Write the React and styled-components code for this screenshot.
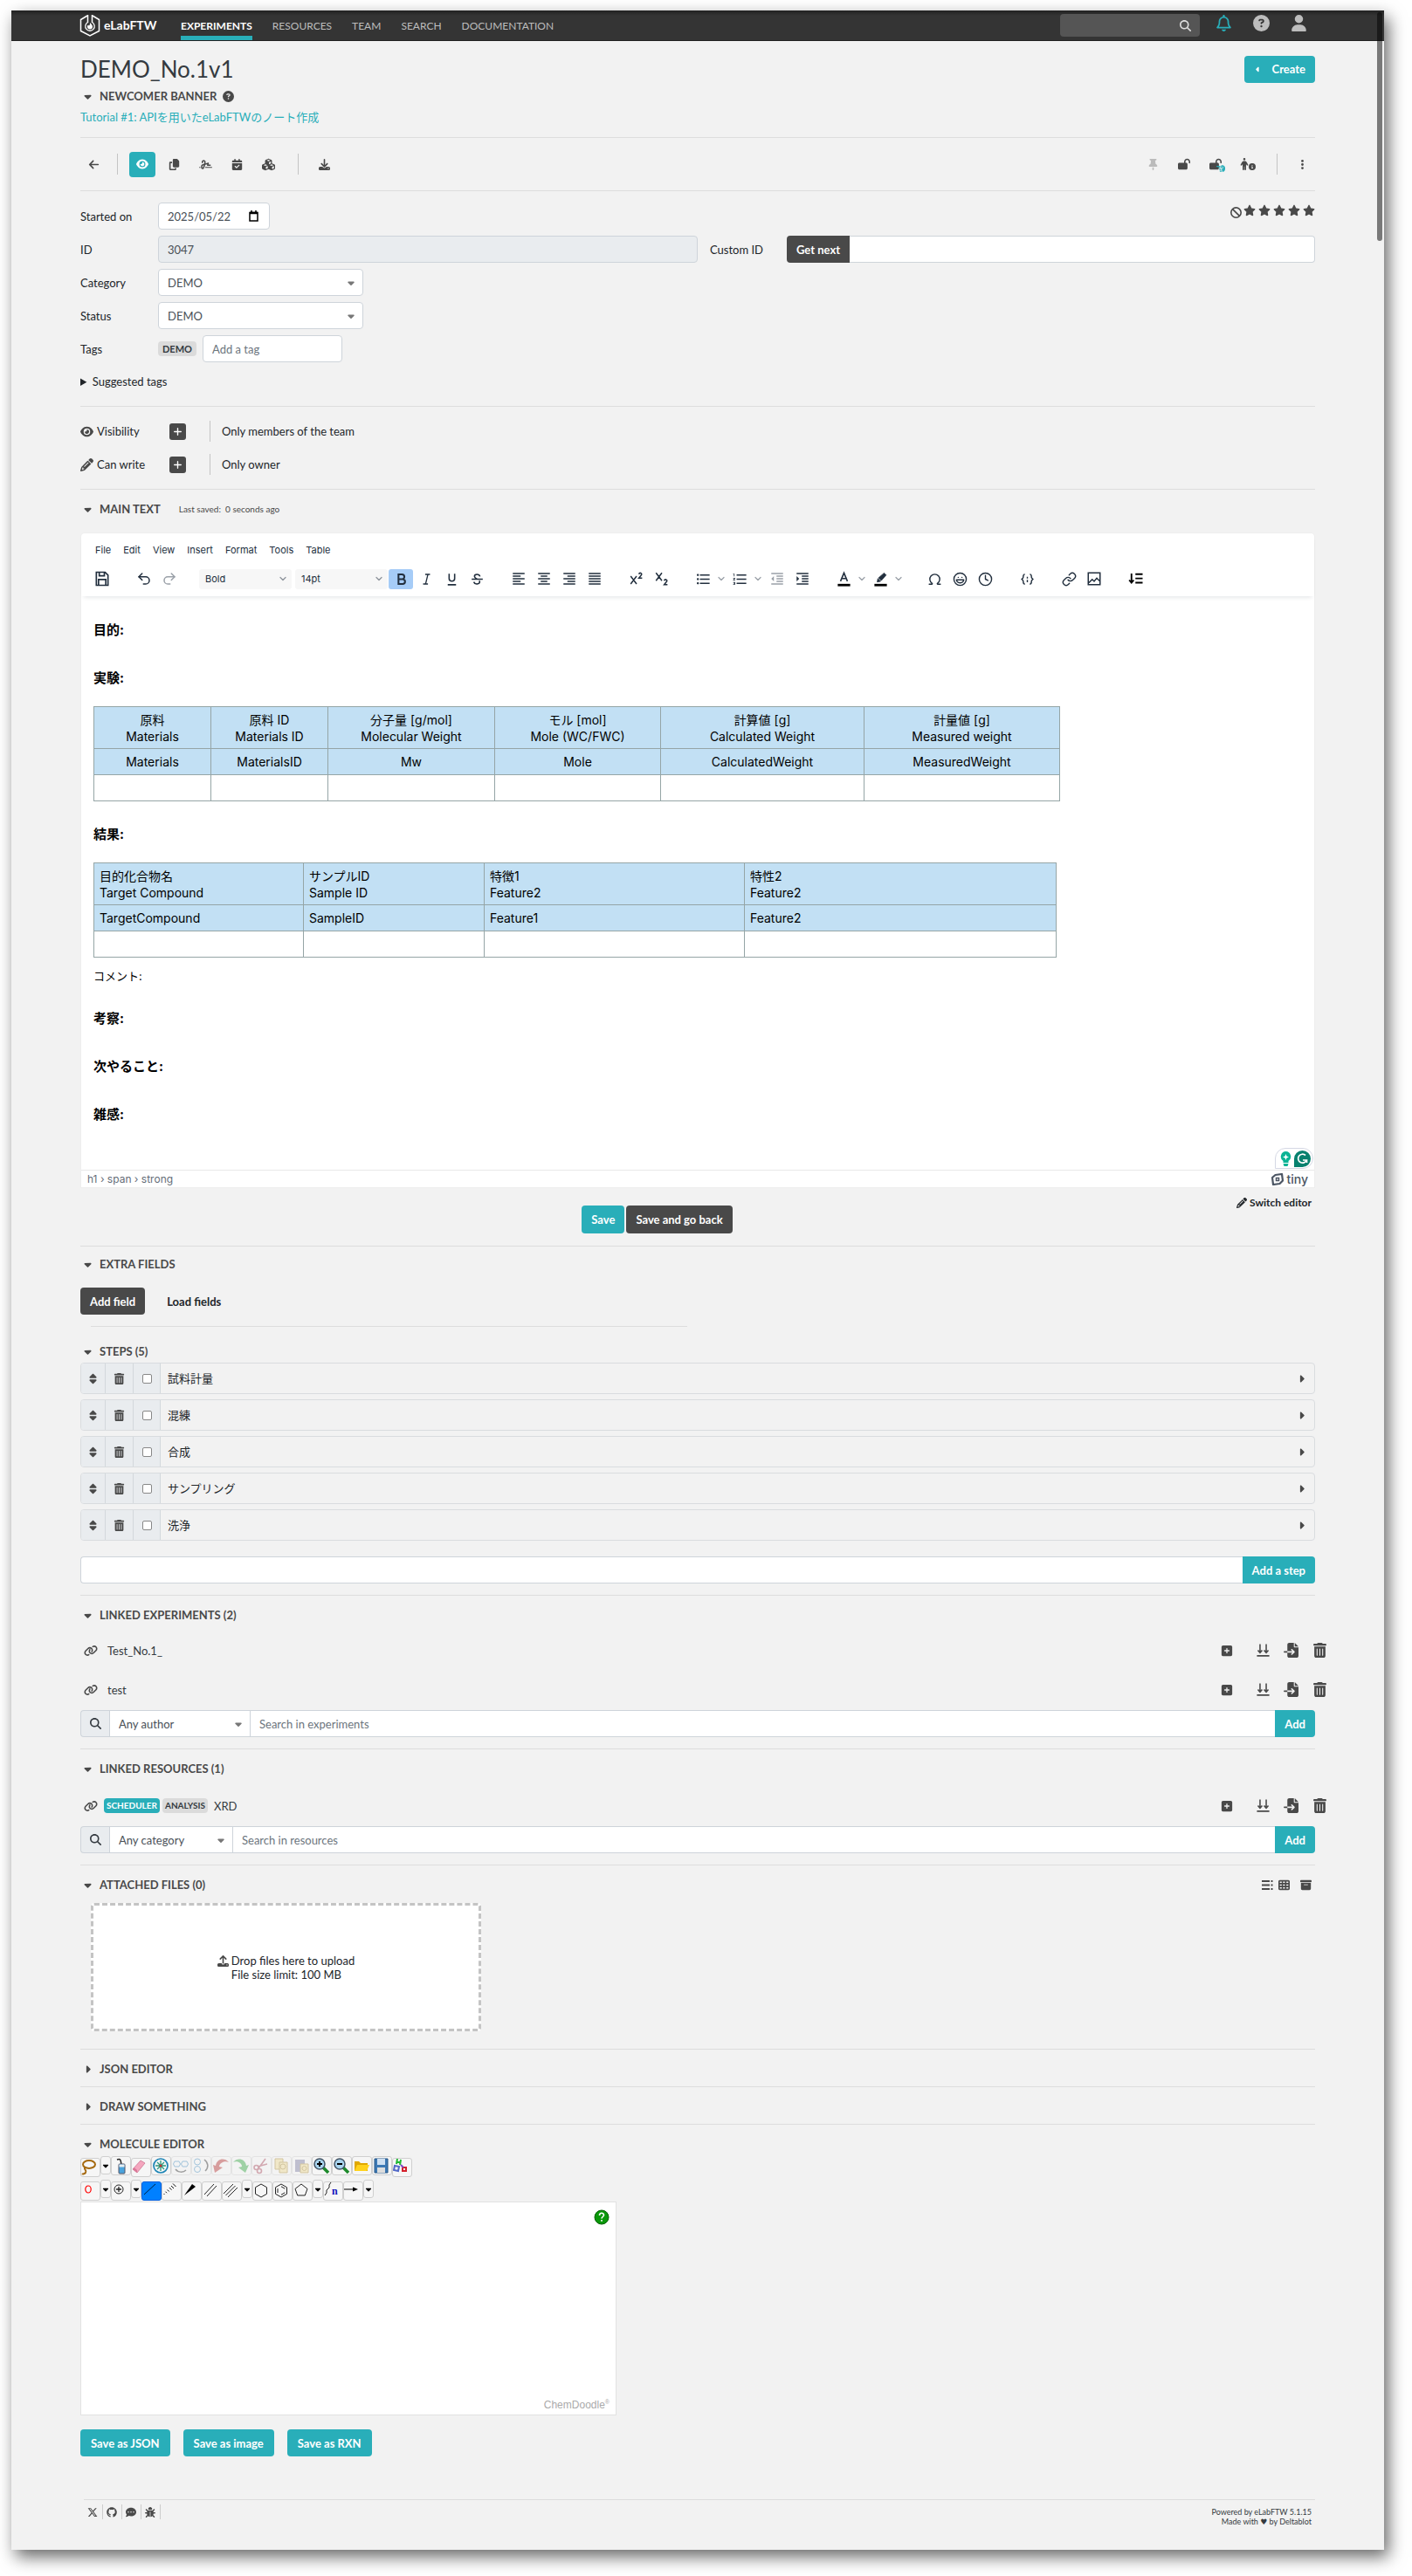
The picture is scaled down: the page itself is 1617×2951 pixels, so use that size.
import React from "react";
import styled, { createGlobalStyle, css } from "styled-components";
import {
  FaArrowLeft, FaEye, FaCopy, FaSignature, FaCalendarCheck, FaCubes, FaDownload, FaThumbtack,
  FaLockOpen, FaEllipsisVertical, FaBan, FaStar, FaPencil, FaSort, FaTrashCan, FaLink,
  FaMagnifyingGlass, FaFileImport, FaBoxArchive, FaTableCells, FaBug, FaGithub, FaXTwitter,
  FaCommentDots, FaCircleQuestion, FaUser, FaRegBell, FaUpload, FaCaretDown, FaCaretRight,
  FaCaretLeft, FaSquarePlus, FaPlus, FaPerson, FaCircleInfo, FaHandPointLeft,
} from "react-icons/fa6";
import {
  MdFormatAlignLeft, MdFormatAlignCenter, MdFormatAlignRight, MdFormatAlignJustify,
  MdFormatListBulleted, MdFormatListNumbered, MdFormatIndentDecrease, MdFormatIndentIncrease,
} from "react-icons/md";
import { Omega, Laugh, Clock, Link as LinkIcon, ChevronDown, Undo2 as Undo, Redo2 as Redo } from "lucide-react";

const teal = "#29aeb9";
const dark = "#494949";
const line = "#dddddd";
const field = "#ced4da";
const lato = `Lato, "Noto Sans CJK JP", sans-serif`;
const inter = `Inter, "Noto Sans CJK JP", sans-serif`;

const Global = createGlobalStyle`
  * { box-sizing: border-box; }
  body { margin: 0; background: #fff; font: 13px/20px ${lato}; color: #343a40; }
  button, input, select { font: inherit; color: inherit; margin: 0; }
  button { cursor: pointer; }
  svg { display: block; flex: none; }
`;

const Frame = styled.div`
  margin: 12px 32px 29px 13px;
  background: #f2f2f2;
  box-shadow: 5px 8px 18px rgba(0, 0, 0, 0.6);
  position: relative;
`;
const Scrollbar = styled.div`
  position: absolute;
  top: 2px;
  right: 2px;
  width: 6px;
  height: 262px;
  border-radius: 3px;
  background: rgba(0, 0, 0, 0.5);
`;
const Nav = styled.nav`
  height: 35px;
  padding: 0 88px 0 78px;
  display: flex;
  align-items: center;
  background: linear-gradient(#222, #343434 6px);
  border-bottom: 1px solid #222;
`;
const Brand = styled.a`
  display: flex;
  align-items: center;
  gap: 4px;
  width: 116px;
  color: #fff;
  font-size: 14px;
  font-weight: 700;
  text-decoration: none;
`;
const NavLink = styled.a`
  height: 34px;
  line-height: 36px;
  margin-right: 23px;
  text-decoration: none;
  color: ${(p) => (p.$on ? "#fff" : "#bdbdbd")};
  font-weight: ${(p) => (p.$on ? 700 : 400)};
  font-size: 12px;
  border-bottom: 5px solid ${(p) => (p.$on ? teal : "transparent")};
`;
const NavSearch = styled.label`
  margin-left: auto;
  width: 160px;
  height: 26px;
  padding: 0 10px;
  display: flex;
  align-items: center;
  background: #555;
  border-radius: 4px;
  color: #ddd;
  input { flex: 1; min-width: 0; border: 0; background: none; outline: 0; }
`;
const NavIcon = styled.button`
  border: 0;
  background: none;
  padding: 0;
  margin-left: ${(p) => p.$gap || 25}px;
  margin-bottom: 6px;
  color: ${(p) => p.$color || "#bdbdbd"};
`;
const Main = styled.main`
  padding: 0 79px;
`;
const Header = styled.header`
  padding-top: 16px;
  display: flex;
  align-items: center;
  justify-content: space-between;
`;
const Title = styled.h1`
  margin: 0;
  font-size: 26px;
  line-height: 32px;
  font-weight: 400;
`;
const Button = styled.button`
  height: ${(p) => p.$h || 31}px;
  padding: 0 ${(p) => p.$pad || 11}px;
  display: inline-flex;
  align-items: center;
  gap: 12px;
  border: 0;
  border-radius: ${(p) => ({ left: "4px 0 0 4px", right: "0 4px 4px 0" })[p.$side] || "4px"};
  background: ${(p) => ({ dark, plain: "transparent" })[p.$kind] || teal};
  color: ${(p) => (p.$kind === "plain" ? "#212529" : "#fff")};
  font-weight: 700;
  white-space: nowrap;
`;
const Rule = styled.hr`
  height: 1px;
  border: 0;
  margin: ${(p) => p.$top || 0}px 0 0;
  background: ${line};
`;
const SectionHead = styled.div`
  display: flex;
  align-items: center;
  height: 24px;
  margin-top: ${(p) => (p.$top === undefined ? 10 : p.$top)}px;
  color: ${dark};
`;
const Toggle = styled.button`
  border: 0;
  background: none;
  padding: 0 0 0 2px;
  width: 22px;
`;
const SectionTitle = styled.h2`
  margin: 0;
  font-size: 13px;
  line-height: 24px;
  font-weight: 700;
`;
const Saved = styled.span`
  margin-left: 21px;
  font-size: 10px;
  white-space: pre;
`;
const HeadEnd = styled.span`
  margin-left: ${(p) => (p.$end ? "auto" : "7px")};
  padding-right: ${(p) => (p.$end ? 4 : 0)}px;
  display: flex;
  align-items: center;
  gap: 6px;
`;
const Tutorial = styled.a`
  display: block;
  line-height: 24px;
  color: ${teal};
  text-decoration: none;
`;
const Actions = styled.div`
  height: 60px;
  margin-right: -6px;
  display: flex;
  align-items: center;
  color: ${dark};
`;
const Action = styled.button`
  width: 30px;
  height: 29px;
  margin-right: 6px;
  padding: 0;
  display: inline-flex;
  align-items: center;
  justify-content: center;
  border: 0;
  border-radius: 4px;
  color: ${(p) => (p.$on ? "#fff" : p.$muted ? "#bbb" : dark)};
  background: ${(p) => (p.$on ? teal : "transparent")};
`;
const Divider = styled.span`
  width: 1px;
  height: 24px;
  margin: 0 ${(p) => p.$r || 13}px 0 ${(p) => p.$l || 6}px;
  background: #c4c4c4;
`;
const Push = styled.span`
  flex: 1;
`;
const Overlap = styled.span`
  position: relative;
  svg + svg { position: absolute; right: -4px; bottom: -3px; color: ${teal}; }
`;
const Pair = styled.span`
  display: flex;
  align-items: flex-end;
  svg + svg { margin-left: -2px; }
`;
const Form = styled.div`
  padding-top: 13px;
  display: grid;
  gap: 7px;
`;
const Row = styled.div`
  display: flex;
  align-items: center;
  height: 31px;
`;
const Label = styled.label`
  width: ${(p) => p.$w || 89}px;
  padding-left: ${(p) => p.$inset || 0}px;
  color: #212529;
`;
const control = css`
  height: 31px;
  padding: 0 10px;
  border: 1px solid ${field};
  border-radius: 4px;
  background: #fff;
  color: #495057;
  min-width: 0;
  outline: 0;
  &::placeholder { color: #6c757d; }
`;
const Input = styled.input`
  ${control}
  ${(p) => (p.$w ? `width: ${p.$w}px;` : "flex: 1;")}
  ${(p) => p.$side === "left" && "border-radius: 4px 0 0 4px; border-right: 0;"}
  ${(p) => p.$side === "right" && "border-radius: 0 4px 4px 0; border-left: 0;"}
  ${(p) => p.$side === "mid" && "border-radius: 0; border-right: 0; border-left: 0;"}
  ${(p) => p.readOnly && "background: #e9ecef;"}
`;
const DateBox = styled.div`
  ${control}
  width: 128px;
  display: flex;
  align-items: center;
  input { width: 92px; border: 0; padding: 0; outline: 0; background: none; }
  button { border: 0; padding: 0; background: none; color: #000; }
`;
const SelectBox = styled.span`
  position: relative;
  width: ${(p) => p.$w}px;
  display: flex;
  svg { position: absolute; right: 8px; top: 10px; color: #777; pointer-events: none; }
  select { ${control} width: 100%; appearance: none; ${(p) => p.$flat && "border-radius: 0;"} }
`;
const Half = styled.div`
  display: flex;
  align-items: center;
  flex: 1;
  min-width: 0;
`;
const Stars = styled.div`
  margin-left: auto;
  display: flex;
  align-items: flex-start;
  gap: 3px;
  color: ${dark};
  padding-bottom: 11px;
  button { border: 0; padding: 0; background: none; }
  button:first-child { margin: 3px -1px 0 0; }
`;
const Badge = styled.span`
  height: 17px;
  line-height: 17px;
  padding: 0 ${(p) => p.$pad || 3}px;
  margin-right: ${(p) => p.$r || 3}px;
  border-radius: 4px;
  font-size: ${(p) => p.$fs || 10}px;
  font-weight: 700;
  color: ${(p) => (p.$on ? "#fff" : "#343a40")};
  background: ${(p) => (p.$on ? teal : "#dbdbdb")};
`;
const Suggested = styled.details`
  margin: 11px 0 17px;
  line-height: 22px;
  color: #212529;
  summary { cursor: pointer; }
`;
const Permissions = styled.div`
  padding: 9px 0;
`;
const Permission = styled.div`
  display: flex;
  align-items: center;
  height: 38px;
  color: #212529;
`;
const PermName = styled.span`
  width: 102px;
  display: flex;
  align-items: center;
  gap: 4px;
  svg { color: ${dark}; }
`;
const PlusButton = styled.button`
  width: 19px;
  height: 19px;
  padding: 0;
  display: grid;
  place-items: center;
  border: 0;
  border-radius: 3px;
  background: ${dark};
  color: #fff;
`;

/* rich text editor */
const Editor = styled.div`
  margin: 16px 1px 0;
  border-radius: 4px 4px 0 0;
  background: #fff;
  box-shadow: 0 0 0 1px #eee;
  font-family: ${inter};
  position: relative;
`;
const EditorTop = styled.div`
  padding: 6px 4px 0;
  box-shadow: 0 4px 5px -3px rgba(34, 47, 62, 0.14);
`;
const Menu = styled.div`
  height: 26px;
  display: flex;
  align-items: center;
  padding-left: 5px;
  button { border: 0; background: none; padding: 0 7px; font-size: 11px; color: #222f3e; }
`;
const Tools = styled.div`
  height: 40px;
  display: flex;
  align-items: center;
  color: #222f3e;
  padding-left: 6px;
`;
const Tool = styled.button`
  width: ${(p) => p.$w || 28}px;
  height: 23px;
  margin: 0 ${(p) => p.$r || 1}px 0 0;
  padding: 0;
  display: grid;
  place-items: center;
  border: 0;
  border-radius: 3px;
  background: ${(p) => (p.$on ? "#a6ccf7" : "transparent")};
  color: ${(p) => (p.$muted ? "#9aa0a8" : "#222f3e")};
`;
const ToolSelect = styled.button`
  width: 106px;
  height: 23px;
  margin-right: ${(p) => p.$r}px;
  padding: 0 4px 0 7px;
  display: flex;
  align-items: center;
  justify-content: space-between;
  border: 0;
  border-radius: 3px;
  background: #f7f7f7;
  color: #222f3e;
  font-size: 11px;
  svg { color: #8d939b; }
`;
const Doc = styled.div`
  padding: 28px 14px 52px;
  color: #000;
  h3 { margin: 0 0 33px; font-size: 15px; line-height: 22px; font-weight: 700; }
  h3:last-child { margin-bottom: 0; }
  p { margin: 11px 0 28px; font-size: 13px; line-height: 20px; }
`;
const DocTable = styled.table`
  width: ${(p) => p.$w}px;
  margin: -12px 0 ${(p) => p.$mb}px;
  table-layout: fixed;
  border-collapse: collapse;
  font-size: 14px;
  line-height: 19px;
  text-align: ${(p) => p.$align};
  th, td { border: 1px solid #95a5a6; padding: 0 6px; font-weight: 400; height: 30px; }
  thead th, tbody tr:first-child td { background: #c2e0f4; }
  thead th { height: 48px; }
`;
const Status = styled.div`
  height: 20px;
  display: flex;
  align-items: center;
  justify-content: space-between;
  padding: 0 7px;
  border-top: 1px solid #e8e8e8;
  color: #656d78;
  font-size: 12px;
`;
const Tiny = styled.span`
  display: flex;
  align-items: center;
  gap: 3px;
  font-size: 14px;
  font-weight: 500;
  color: #4b5563;
`;
const Helper = styled.div`
  position: absolute;
  right: 1px;
  bottom: 21px;
  width: 44px;
  height: 24px;
  padding: 0 2px 0 5px;
  display: flex;
  align-items: center;
  justify-content: space-between;
  border: 1px solid #d5d8e4;
  border-radius: 12px 12px 12px 0;
  background: #fff;
`;
const SaveRow = styled.div`
  display: flex;
  align-items: flex-start;
`;
const SaveButtons = styled.div`
  flex: 1;
  display: flex;
  justify-content: center;
  gap: 2px;
  margin-top: 21px;
`;
const Switch = styled.button`
  margin-top: 8px;
  padding: 0 4px 0 3px;
  border: 0;
  background: none;
  display: flex;
  align-items: center;
  gap: 3px;
  font-size: 12px;
  font-weight: 700;
  color: #212529;
`;
const FieldButtons = styled.div`
  display: flex;
  gap: 14px;
  margin-top: 15px;
`;
const ShortRule = styled(Rule)`
  margin-left: 12px;
  width: 683px;
`;
const Steps = styled.ul`
  list-style: none;
  margin: 1px 0 18px;
  padding: 0;
  display: grid;
  gap: 6px;
`;
const Step = styled.li`
  height: 36px;
  display: flex;
  border: 1px solid #d9dcdf;
  border-radius: 4px;
  align-items: center;
  overflow: hidden;
  color: #212529;
`;
const StepCell = styled.span`
  width: ${(p) => p.$w}px;
  height: 34px;
  display: grid;
  place-items: center;
  background: #e9ecef;
  border-right: 1px solid #d3d8dc;
  color: ${dark};
  button { border: 0; background: none; padding: 0; }
  input { width: 11px; height: 11px; appearance: none; border: 1px solid #888; border-radius: 2px; background: #fff; }
`;
const StepName = styled.span`
  padding-left: 8px;
  flex: 1;
`;
const StepOpen = styled.button`
  width: 30px;
  border: 0;
  background: none;
  padding: 0 0 0 9px;
  color: ${dark};
`;
const Group = styled.div`
  display: flex;
  margin-top: ${(p) => p.$top || 0}px;
`;
const GroupIcon = styled.span`
  width: 33px;
  height: 31px;
  display: grid;
  place-items: center;
  border: 1px solid ${field};
  border-right: 0;
  border-radius: 4px 0 0 4px;
  background: #e9ecef;
  color: #343a40;
`;
const Links = styled.ul`
  list-style: none;
  margin: ${(p) => p.$top}px 0 0;
  padding: 0;
`;
const LinkRow = styled.li`
  height: 45px;
  margin-right: -14px;
  display: flex;
  align-items: center;
  > svg { margin: 0 7px 0 4px; color: ${dark}; }
  a { color: #343a40; text-decoration: none; padding-left: 4px; }
`;
const LinkTools = styled.span`
  margin-left: auto;
  display: grid;
  grid-template-columns: 40px 32px 33px 17px;
  justify-items: start;
  align-items: center;
  color: ${dark};
  button { border: 0; background: none; padding: 0; color: inherit; }
`;
const Drop = styled.div`
  width: 447px;
  height: 147px;
  margin: 9px 0 0 12px;
  border: 3px dashed #c4c4c4;
  border-radius: 4px;
  background: #fff;
  display: flex;
  justify-content: center;
  align-items: center;
  color: #212529;
  line-height: 16px;
  svg { margin-right: 3px; align-self: flex-start; margin-top: 2px; color: ${dark}; }
`;
const DropInner = styled.div`
  display: flex;
`;
const ChemBar = styled.div`
  display: flex;
  align-items: flex-start;
  height: 24px;
  margin-top: ${(p) => p.$top}px;
`;
const ChemButton = styled.button`
  width: 23px;
  height: 22px;
  margin-top: ${(p) => (p.$low ? 2 : 0)}px;
  padding: 0;
  border: 1px solid ${(p) => (p.$on ? "#0060e0" : "#cfcfcf")};
  border-radius: 3px;
  background: ${(p) => (p.$on ? "#0080ff" : "#f6f6f6")};
  opacity: ${(p) => (p.$dim ? 0.4 : 1)};
  svg { width: 20px; height: 20px; }
`;
const ChemDrop = styled.button`
  width: 12px;
  height: 21px;
  padding: 0;
  display: grid;
  place-items: center;
  border: 1px solid #cfcfcf;
  border-radius: 3px;
  background: #f6f6f6;
  color: #000;
`;
const Canvas = styled.div`
  width: 614px;
  height: 245px;
  margin-top: 1px;
  padding: 8px 7px 3px;
  display: flex;
  flex-direction: column;
  justify-content: space-between;
  align-items: flex-end;
  border: 1px solid #e2e2e2;
  background: #fff;
  color: #aaa;
  font: 12px/15px "Liberation Sans", sans-serif;
  sup { font-size: 7px; line-height: 1px; }
`;
const SaveAs = styled.div`
  display: flex;
  gap: 15px;
  margin-top: 16px;
`;
const Footer = styled.footer`
  margin: 49px 0 0 4px;
  height: 58px;
  padding: 5px 4px 0 0;
  border-top: 1px solid ${line};
  display: flex;
  justify-content: space-between;
  font-size: 9px;
  line-height: 11px;
  text-align: right;
`;
const Social = styled.div`
  display: flex;
  height: 17px;
  color: ${dark};
  a { width: 22px; padding-left: 4px; display: flex; align-items: center; color: inherit; border-right: 1px solid #ccc; }
`;
const Powered = styled.div`
  padding-top: 3px;
  font-family: Lato, "DejaVu Sans", sans-serif;
  a { color: inherit; text-decoration: none; }
`;

const Sv = ({ s = 20, v = 24, children, ...p }) => (
  <svg width={s} height={s} viewBox={`0 0 ${v} ${v}`} fill="none" stroke="currentColor" strokeWidth="2" {...p}>
    {children}
  </svg>
);

const Logo = () => (
  <svg width="24" height="26" viewBox="0 0 24 26" fill="none" stroke="#fff" strokeWidth="1.500">
    <path d="M9 2 1.500 6.500v13L12 25l10.500-5.500v-13L15 2" />
    <path d="M9.500 1v9M14.500 1v9" />
    <path d="M9.500 9.500a5.200 5.200 0 1 0 5 0" strokeWidth="1.300" />
    <path d="M12 10c2 2 3 3 3 4.500a3 3 0 0 1-6 0c0-1 .5-1.500 1-2 .5 1 1 1 1.500.5.500-1 .5-2 .5-3z" fill="#fff" stroke="none" />
  </svg>
);
const DoubleDown = () => (
  <Sv s={17} strokeWidth="2.200"><path d="M2 21h20M7 2v14M17 2v14M3.500 12 7 16l3.500-4M13.500 12l3.500 4 3.500-4" /></Sv>
);
const Rows = () => (
  <Sv s={13} v={13}><path d="M0 2h9M0 6.500h9M0 11h9M10.500 2h2M10.500 6.500h2M10.500 11h2" /></Sv>
);
const Chev = () => <ChevronDown size={12} strokeWidth={2.5} />;

const Section = ({ title, open = true, top, children }) => (
  <SectionHead $top={top}>
    <Toggle aria-label={`Toggle ${title}`}>{open ? <FaCaretDown size={13} /> : <FaCaretRight size={13} />}</Toggle>
    <SectionTitle>{title}</SectionTitle>
    {children}
  </SectionHead>
);

const Select = ({ id, w, value, flat, label }) => (
  <SelectBox $w={w} $flat={flat}>
    <select id={id} aria-label={label} defaultValue={value}><option>{value}</option></select>
    <FaCaretDown size={12} />
  </SelectBox>
);

const LinkItem = ({ children }) => (
  <LinkRow>
    <FaLink size={16} />
    {children}
    <LinkTools>
      <button aria-label="Add"><FaSquarePlus size={14} /></button>
      <button aria-label="Import links"><DoubleDown /></button>
      <button aria-label="Import body"><FaFileImport size={17} /></button>
      <button aria-label="Delete"><FaTrashCan size={17} /></button>
    </LinkTools>
  </LinkRow>
);

const steps = ["試料計量", "混練", "合成", "サンプリング", "洗浄"];

const Zoom = ({ minus }) => (
  <svg viewBox="0 0 20 20">
    <path d="m12 12 6 6" stroke="#1d8a2c" strokeWidth="3.500" />
    <circle cx="8" cy="8" r="6" fill="#a8d4ee" stroke="#456" strokeWidth="1.500" />
    <path d={minus ? "M5 8h6" : "M5 8h6M8 5v6"} stroke="#000" strokeWidth="2" />
  </svg>
);
const Ring = ({ inner }) => (
  <svg viewBox="0 0 20 20" fill="none" stroke="#222">
    <path d="m9 2 6.500 3.800v7.500L9 17l-6.500-3.700V5.800z" />
    {inner && <path d="M5 7.200v4.800M9 4.800l4.300 2.500M9 14.300l4.300-2.500" />}
  </svg>
);
const Bonds = ({ n }) => (
  <svg viewBox="0 0 20 20" fill="none" stroke="#111" strokeWidth=".9">
    <path d={n === 2 ? "M2 14 13 2M5 16 16 4" : "M1 13 12 2M3.500 15 14.500 4M6 17 17 6"} />
  </svg>
);
const Turn = ({ c, flip }) => (
  <svg viewBox="0 0 20 20">
    <path d={flip ? "M1 6C6 0 15 2 16 10l3-1-4 9-8-6 4-1C11 7 6 4 1 6z" : "M19 6C14 0 5 2 4 10L1 9l2 9 9-6-4-1c0-4 6-7 11-5z"} fill={c} />
  </svg>
);
const ringPair = "M3 5h5l1.500 3L8 11H3L1.500 8zM12 5h5l1.500 3-1.500 3h-5l-1.500-3z";

const topChem = [
  { n: "Lasso", low: 1, i: <svg viewBox="0 0 20 20" fill="none" stroke="#a5690f" strokeWidth="2"><ellipse cx="9" cy="6.500" rx="7" ry="4.500" /><path d="M4 10c-1 3 3 3 1 6-1 1-3 2-4 1" /></svg> },
  { drop: 1 },
  { n: "Clean", i: <svg viewBox="0 0 20 20"><path d="M6 3c5-2 4 2 5 5" stroke="#222" strokeWidth="1.500" fill="none" /><rect x="8" y="8" width="7" height="11" rx="1" fill="#4aa3dd" stroke="#556" /><path d="M8.500 8.500h6v3h-6z" fill="#e7eef2" /></svg> },
  { n: "Erase", low: 1, i: <svg viewBox="0 0 20 20"><path d="m1 12 9-10 5 3-9 11z" fill="#f4a6be" stroke="#c76a88" strokeWidth=".7" /><path d="m1 12 5 4v-3L2.500 10z" fill="#d97797" /></svg> },
  { n: "Center", i: <svg viewBox="0 0 20 20" fill="none"><circle cx="10" cy="10" r="8" stroke="#1c84b5" strokeWidth="1.700" /><path d="M10 4v12M4 10h12M6 6l8 8M14 6l-8 8" stroke="#2a9a7e" strokeWidth="1.300" /><circle cx="10" cy="10" r="1.500" fill="#c33" /></svg> },
  { n: "Flip horizontal", dim: 1, i: <svg viewBox="0 0 20 20" fill="none" stroke="#2a80b8"><path d={ringPair} /><path d="M4 14c3 4 9 4 12 1" stroke="#222" strokeWidth="1.500" /></svg> },
  { n: "Flip vertical", dim: 1, i: <svg viewBox="0 0 20 20" fill="none" stroke="#2a80b8"><circle cx="6" cy="5.500" r="3.500" /><circle cx="6" cy="14" r="3.500" /><path d="M14 3c5 4 5 9 1 13" stroke="#222" strokeWidth="1.500" /></svg> },
  { n: "Undo", dim: 1, i: <Turn c="#b02020" /> },
  { n: "Redo", dim: 1, i: <Turn c="#25a035" flip /> },
  { n: "Cut", dim: 1, i: <svg viewBox="0 0 20 20" fill="none" stroke="#a33c50" strokeWidth="1.600"><path d="M15 2 7 13M17 8 6 11" /><circle cx="4.500" cy="12" r="2.500" /><circle cx="8" cy="16" r="2.500" /></svg> },
  { n: "Copy", dim: 1, i: <svg viewBox="0 0 20 20" stroke="#a48328" fill="#eed98a"><path d="M3 2h9v12H3z" /><path d="M8 6h9v12H8z" /><circle cx="12" cy="11" r="3" /></svg> },
  { n: "Paste", dim: 1, i: <svg viewBox="0 0 20 20"><path d="M3 3h11v14H3z" fill="#74749c" /><path d="M9 8h9v10H9z" fill="#eed98a" stroke="#a48328" /><circle cx="13.500" cy="13" r="2.500" fill="none" stroke="#a48328" /></svg> },
  { n: "Zoom in", i: <Zoom /> },
  { n: "Zoom out", i: <Zoom minus /> },
  { n: "Open", i: <svg viewBox="0 0 20 20"><path d="M2 16V5h5l2 2h8v9z" fill="#e0a800" /><path d="m2 16 3-7h14l-3 7z" fill="#ffd21c" /></svg> },
  { n: "Save", i: <svg viewBox="0 0 20 20"><path d="M2 2h15v16H2z" fill="#3c78b4" stroke="#275685" /><path d="M5 2h9v7H5z" fill="#cfe0f2" /><path d="M5 12h9v6H5z" fill="#ddd" /></svg> },
  { n: "Elements", low: 1, i: <svg viewBox="0 0 20 20" fill="none" strokeWidth="2"><path d="M5 0 4 6M4 4h5M9 1 8 7" stroke="#1fb832" /><path d="m2 8 5 1-1 5-5-1z" stroke="#5068c8" /><path d="M11 10h4v4h-4z" stroke="#d4202c" /><path d="m9 7 3 3" stroke="#7b4ac8" /></svg> },
];
const bottomChem = [
  { n: "Oxygen", low: 1, i: <svg viewBox="0 0 20 20" fill="none"><ellipse cx="8" cy="8" rx="3.200" ry="4" stroke="#f00" strokeWidth="1.200" /></svg> },
  { drop: 1 },
  { n: "Charge", low: 1, i: <svg viewBox="0 0 20 20" fill="none" stroke="#222"><circle cx="8" cy="8" r="5" /><path d="M8 5v6M5 8h6" strokeWidth="1.300" /></svg> },
  { drop: 1 },
  { n: "Single bond", low: 1, on: 1, i: <svg viewBox="0 0 20 20" stroke="#024"><path d="M2 14 15 2" /></svg> },
  { n: "Recessed bond", low: 1, i: <svg viewBox="0 0 20 20" stroke="#111"><path d="m1.500 13 1 1M3.500 10.700l1.500 1.500M5.700 8.500l2 2M8 6.200l2.500 2.500M10 4l3 3M12 1.500l3.500 3.500" /></svg> },
  { n: "Protruding bond", low: 1, i: <svg viewBox="0 0 20 20"><path d="m2 15 9-13 4 3z" /></svg> },
  { n: "Double bond", low: 1, i: <Bonds n={2} /> },
  { n: "Triple bond", low: 1, i: <Bonds n={3} /> },
  { drop: 1 },
  { n: "Cyclohexane", low: 1, i: <Ring /> },
  { n: "Benzene", low: 1, i: <Ring inner /> },
  { n: "Cyclopentane", low: 1, i: <svg viewBox="0 0 20 20" fill="none" stroke="#222"><path d="m9 2 7 5.500L13.300 15H4.700L2 7.500z" /></svg> },
  { drop: 1 },
  { n: "Chain", low: 1, i: <svg viewBox="0 0 20 20"><path d="M8 0 6 3v3L3 9v3l-2 3" fill="none" stroke="#222" /><text x="9" y="14" fontFamily="Liberation Serif, serif" fontWeight="700" fontSize="12" fill="#11b">n</text></svg> },
  { n: "Arrow", low: 1, i: <svg viewBox="0 0 20 20"><path d="M0 8h11" stroke="#000" /><path d="m10 5.500 6 2.500-6 2.500z" /></svg> },
  { drop: 1 },
];
const Chem = ({ items, top }) => (
  <ChemBar $top={top}>
    {items.map((b, k) =>
      b.drop ? (
        <ChemDrop key={k} aria-label="More"><FaCaretDown size={10} /></ChemDrop>
      ) : (
        <ChemButton key={k} aria-label={b.n} $low={b.low} $dim={b.dim} $on={b.on}>{b.i}</ChemButton>
      )
    )}
  </ChemBar>
);

export default function App() {
  return (
    <Frame>
      <Global />
      <Nav>
        <Brand href="#"><Logo />eLabFTW</Brand>
        <NavLink href="#" $on>EXPERIMENTS</NavLink>
        <NavLink href="#">RESOURCES</NavLink>
        <NavLink href="#">TEAM</NavLink>
        <NavLink href="#">SEARCH</NavLink>
        <NavLink href="#">DOCUMENTATION</NavLink>
        <NavSearch><input aria-label="Search" /><FaMagnifyingGlass size={13} /></NavSearch>
        <NavIcon $color={teal} $gap={18} aria-label="Notifications"><FaRegBell size={19} /></NavIcon>
        <NavIcon $gap={24} aria-label="Help"><FaCircleQuestion size={19} /></NavIcon>
        <NavIcon $gap={24} aria-label="Account"><FaUser size={19} /></NavIcon>
      </Nav>
      <Main>
        <Header>
          <Title>DEMO_No.1v1</Title>
          <Button><FaCaretLeft size={9} />Create</Button>
        </Header>
        <Section title="NEWCOMER BANNER" top={3}>
          <HeadEnd><FaCircleQuestion size={13} /></HeadEnd>
        </Section>
        <Tutorial href="#">Tutorial #1: APIを用いたeLabFTWのノート作成</Tutorial>
        <Rule $top={11} />
        <Actions>
          <Action aria-label="Back"><FaArrowLeft size={13} /></Action>
          <Divider />
          <Action $on aria-label="View"><FaEye size={14} /></Action>
          <Action aria-label="Duplicate"><FaCopy size={13} /></Action>
          <Action aria-label="Sign"><FaSignature size={15} /></Action>
          <Action aria-label="Timestamp"><FaCalendarCheck size={13} /></Action>
          <Action aria-label="Blockchain"><FaCubes size={15} /></Action>
          <Divider $l={13} $r={14} />
          <Action aria-label="Export"><FaDownload size={13} /></Action>
          <Push />
          <Action $muted aria-label="Pin"><FaThumbtack size={13} /></Action>
          <Action aria-label="Lock"><FaLockOpen size={14} /></Action>
          <Action aria-label="Exclusive edit"><Overlap><FaLockOpen size={14} /><FaHandPointLeft size={10} /></Overlap></Action>
          <Action aria-label="Request action"><Pair><FaPerson size={14} /><FaCircleInfo size={8} /></Pair></Action>
          <Divider $l={13} $r={13} />
          <Action aria-label="More"><FaEllipsisVertical size={13} /></Action>
        </Actions>
        <Rule />
        <Form>
          <Row>
            <Label htmlFor="date">Started on</Label>
            <DateBox>
              <input id="date" defaultValue="2025/05/22" />
              <button aria-label="Open calendar">
                <Sv s={13} v={13} strokeWidth="1.500"><path d="M2 2.500h9v9.500H2z" /><path d="M2 3h9" strokeWidth="2.500" /><path d="M4 0v2M9 0v2" /></Sv>
              </button>
            </DateBox>
            <Stars>
              <button aria-label="No rating"><FaBan size={13} /></button>
              {[1, 2, 3, 4, 5].map((n) => <button key={n} aria-label={`${n} stars`}><FaStar size={14} /></button>)}
            </Stars>
          </Row>
          <Row>
            <Half>
              <Label htmlFor="id">ID</Label>
              <Input id="id" readOnly value="3047" />
            </Half>
            <Half>
              <Label htmlFor="custom" $w={102} $inset={14}>Custom ID</Label>
              <Button $kind="dark" $side="left">Get next</Button>
              <Input id="custom" $side="right" />
            </Half>
          </Row>
          <Row><Label htmlFor="cat">Category</Label><Select id="cat" w={235} value="DEMO" /></Row>
          <Row><Label htmlFor="status">Status</Label><Select id="status" w={235} value="DEMO" /></Row>
          <Row>
            <Label htmlFor="tag">Tags</Label>
            <Badge $r={7} $fs={11} $pad={5}>DEMO</Badge>
            <Input id="tag" $w={160} placeholder="Add a tag" />
          </Row>
        </Form>
        <Suggested><summary>Suggested tags</summary></Suggested>
        <Rule />
        <Permissions>
          <Permission>
            <PermName><FaEye size={15} /> Visibility</PermName>
            <PlusButton aria-label="Edit visibility"><FaPlus size={11} /></PlusButton>
            <Divider $l={27} />
            Only members of the team
          </Permission>
          <Permission>
            <PermName><FaPencil size={15} /> Can write</PermName>
            <PlusButton aria-label="Edit write access"><FaPlus size={11} /></PlusButton>
            <Divider $l={27} />
            Only owner
          </Permission>
        </Permissions>
        <Rule />
        <Section title="MAIN TEXT"><Saved>{"Last saved:  0 seconds ago"}</Saved></Section>

        <Editor>
          <EditorTop>
            <Menu>
              {["File", "Edit", "View", "Insert", "Format", "Tools", "Table"].map((m) => <button key={m}>{m}</button>)}
            </Menu>
            <Tools>
              <Tool aria-label="Save" $r={20}><Sv><path d="M4 3h12l4 4v14H4zM8 3v5h7V3M7 21v-8h10v8" /></Sv></Tool>
              <Tool aria-label="Undo"><Undo size={18} /></Tool>
              <Tool aria-label="Redo" $muted $r={20}><Redo size={18} /></Tool>
              <ToolSelect $r={4}>Bold<Chev /></ToolSelect>
              <ToolSelect $r={1}>14pt<Chev /></ToolSelect>
              <Tool aria-label="Bold" $on><Sv s={19} strokeWidth="2.600"><path d="M8 5h5a3.500 3.500 0 0 1 0 7H8zM8 12h6a3.500 3.500 0 0 1 0 7H8z" /></Sv></Tool>
              <Tool aria-label="Italic"><Sv s={19} strokeWidth="1.700"><path d="M10 5h7M7 19h7M14 5l-3.500 14" /></Sv></Tool>
              <Tool aria-label="Underline"><Sv s={19}><path d="M8 4v7c0 5 8 5 8 0V4M6 20h12" /></Sv></Tool>
              <Tool aria-label="Strikethrough" $r={20}><Sv s={19}><path d="M16 8c-1-4-8-4-8 0 0 2 2 3 4 4M4 12h16M15 14c3 5-6 7-8 2" /></Sv></Tool>
              <Tool aria-label="Align left"><MdFormatAlignLeft size={18} /></Tool>
              <Tool aria-label="Align centre"><MdFormatAlignCenter size={18} /></Tool>
              <Tool aria-label="Align right"><MdFormatAlignRight size={18} /></Tool>
              <Tool aria-label="Justify" $r={20}><MdFormatAlignJustify size={18} /></Tool>
              <Tool aria-label="Superscript"><Sv s={18}><path d="m3 8 9 12M12 8 3 20M15.500 5c1-3 5-2 4 1l-4 5h5" /></Sv></Tool>
              <Tool aria-label="Subscript" $r={20}><Sv s={18}><path d="m3 3 9 12M12 3 3 15M15.500 15c1-3 5-2 4 1l-4 5h5" /></Sv></Tool>
              <Tool aria-label="Bullet list" $w={26}><MdFormatListBulleted size={19} /></Tool>
              <Tool aria-label="Bullet styles" $w={14} $muted><Chev /></Tool>
              <Tool aria-label="Numbered list" $w={26}><MdFormatListNumbered size={19} /></Tool>
              <Tool aria-label="Number styles" $w={14} $muted><Chev /></Tool>
              <Tool aria-label="Outdent" $muted><MdFormatIndentDecrease size={18} /></Tool>
              <Tool aria-label="Indent" $r={20}><MdFormatIndentIncrease size={18} /></Tool>
              <Tool aria-label="Text colour" $w={26}><Sv s={19}><path d="m7 15 5-12 5 12M9 11h6" /><path d="M3 20.500h18" stroke="#000" strokeWidth="3.500" /></Sv></Tool>
              <Tool aria-label="Text colours" $w={14} $muted><Chev /></Tool>
              <Tool aria-label="Highlight" $w={26}><Sv s={19}><path d="m9 10 8-7 3 3-7 8zM8 11l4 4-5 1z" fill="currentColor" strokeWidth="1" /><path d="M3 20.500h18" stroke="#000" strokeWidth="3.500" /></Sv></Tool>
              <Tool aria-label="Highlight colours" $w={14} $muted $r={20}><Chev /></Tool>
              <Tool aria-label="Special character"><Omega size={17} /></Tool>
              <Tool aria-label="Emoji"><Laugh size={17} /></Tool>
              <Tool aria-label="Date and time" $r={20}><Clock size={17} /></Tool>
              <Tool aria-label="Code sample" $r={20}><Sv s={17}><path d="M8 4C4 4 6 9 5 10l-2 2 2 2c1 1-1 6 3 6M16 4c4 0 2 5 3 6l2 2-2 2c-1 1 1 6-3 6M12 8v3M12 13v4" /></Sv></Tool>
              <Tool aria-label="Link"><LinkIcon size={17} /></Tool>
              <Tool aria-label="Image" $r={20}><Sv s={18}><path d="M3 3h18v18H3zM4 18l5-5 3 3 4-5 5 5M9 8.500h.1" /></Sv></Tool>
              <Tool aria-label="Sort"><Sv s={18} stroke="#000" strokeWidth="2.500"><path d="M5 4v14M1.500 14 5 18l3.500-4M11 5h11M11 11.500h11M11 18h11" /></Sv></Tool>
            </Tools>
          </EditorTop>
          <Doc>
            <h3>目的:</h3>
            <h3>実験:</h3>
            <DocTable $w={1106} $mb={27} $align="center">
              <colgroup><col width="134" /><col width="134" /><col width="191" /><col width="190" /><col width="233" /><col width="224" /></colgroup>
              <thead>
                <tr>
                  <th>原料<br />Materials</th><th>原料 ID<br />Materials ID</th><th>分子量 [g/mol]<br />Molecular Weight</th>
                  <th>モル [mol]<br />Mole (WC/FWC)</th><th>計算値 [g]<br />Calculated Weight</th><th>計量値 [g]<br />Measured weight</th>
                </tr>
              </thead>
              <tbody>
                <tr><td>Materials</td><td>MaterialsID</td><td>Mw</td><td>Mole</td><td>CalculatedWeight</td><td>MeasuredWeight</td></tr>
                <tr><td /><td /><td /><td /><td /><td /></tr>
              </tbody>
            </DocTable>
            <h3>結果:</h3>
            <DocTable $w={1102} $mb={0} $align="left">
              <colgroup><col width="240" /><col width="207" /><col width="298" /><col width="357" /></colgroup>
              <thead>
                <tr><th>目的化合物名<br />Target Compound</th><th>サンプルID<br />Sample ID</th><th>特徴1<br />Feature2</th><th>特性2<br />Feature2</th></tr>
              </thead>
              <tbody>
                <tr><td>TargetCompound</td><td>SampleID</td><td>Feature1</td><td>Feature2</td></tr>
                <tr><td /><td /><td /><td /></tr>
              </tbody>
            </DocTable>
            <p>コメント:</p>
            <h3>考察:</h3>
            <h3>次やること:</h3>
            <h3>雑感:</h3>
          </Doc>
          <Helper>
            <svg width="13" height="17" viewBox="0 0 13 17"><path d="M6.500 0a6 6 0 0 1 3 11v2h-6v-2a6 6 0 0 1 3-11zM3.500 14h6l-1 3h-4z" fill="#0bb394" /><path d="m6.500 3 1 2.500L10 6.500l-2.500 1-1 2.500-1-2.500L3 6.500l2.500-1z" fill="#fff" /></svg>
            <svg width="19" height="19" viewBox="0 0 19 19"><path d="M9.500 0a9.500 9.500 0 1 1 0 19H0V9.500A9.500 9.500 0 0 1 9.500 0z" fill="#07816f" /><path d="M13 5.500A5 5 0 1 0 14.300 11H10M14.500 10.500V14" fill="none" stroke="#fff" strokeWidth="1.700" /></svg>
          </Helper>
          <Status>
            <span>h1 › span › strong</span>
            <Tiny><Sv s={14} v={14} strokeWidth="2.200"><path d="M4.500 2 12 1l1 7.500-3.500 3.500-7.500 1L1 5z" strokeLinejoin="round" /><path d="M5.500 5.500h3v3h-3z" strokeWidth="1.500" /></Sv>tiny</Tiny>
          </Status>
        </Editor>
        <SaveRow>
          <SaveButtons>
            <Button $h={32}>Save</Button>
            <Button $h={32} $kind="dark">Save and go back</Button>
          </SaveButtons>
          <Switch><FaPencil size={12} />Switch editor</Switch>
        </SaveRow>
        <Rule $top={14} />

        <Section title="EXTRA FIELDS" top={8} />
        <FieldButtons>
          <Button $kind="dark">Add field</Button>
          <Button $kind="plain">Load fields</Button>
        </FieldButtons>
        <ShortRule $top={13} />

        <Section title="STEPS (5)" top={16} />
        <Steps>
          {steps.map((s, k) => (
            <Step key={s}>
              <StepCell $w={28}><button aria-label="Move"><FaSort size={13} /></button></StepCell>
              <StepCell $w={32}><button aria-label="Delete"><FaTrashCan size={13} /></button></StepCell>
              <StepCell $w={31}><input type="checkbox" id={`step${k}`} aria-label={s} /></StepCell>
              <StepName>{s}</StepName>
              <StepOpen aria-label="Open step"><FaCaretRight size={13} /></StepOpen>
            </Step>
          ))}
        </Steps>
        <Group>
          <Input aria-label="New step" $side="left" />
          <Button $side="right">Add a step</Button>
        </Group>
        <Rule $top={13} />

        <Section title="LINKED EXPERIMENTS (2)" />
        <Links $top={6}>
          <LinkItem><a href="#">Test_No.1_</a></LinkItem>
          <LinkItem><a href="#">test</a></LinkItem>
        </Links>
        <Group $top={1}>
          <GroupIcon><FaMagnifyingGlass size={13} /></GroupIcon>
          <Select w={162} value="Any author" flat label="Author" />
          <Input aria-label="Search in experiments" placeholder="Search in experiments" $side="mid" />
          <Button $side="right">Add</Button>
        </Group>
        <Rule $top={13} />

        <Section title="LINKED RESOURCES (1)" />
        <Links $top={8}>
          <LinkItem><Badge $on>SCHEDULER</Badge><Badge>ANALYSIS</Badge><a href="#">XRD</a></LinkItem>
        </Links>
        <Group $top={1}>
          <GroupIcon><FaMagnifyingGlass size={13} /></GroupIcon>
          <Select w={142} value="Any category" flat label="Category" />
          <Input aria-label="Search in resources" placeholder="Search in resources" $side="mid" />
          <Button $side="right">Add</Button>
        </Group>
        <Rule $top={13} />

        <Section title="ATTACHED FILES (0)">
          <HeadEnd $end><Rows /><FaTableCells size={13} /><span /><FaBoxArchive size={13} /></HeadEnd>
        </Section>
        <Drop>
          <DropInner><FaUpload size={13} /><span>Drop files here to upload<br />File size limit: 100 MB</span></DropInner>
        </Drop>
        <Rule $top={20} />
        <Section title="JSON EDITOR" open={false} />
        <Rule $top={8} />
        <Section title="DRAW SOMETHING" open={false} />
        <Rule $top={8} />

        <Section title="MOLECULE EDITOR" />
        <Chem items={topChem} top={2} />
        <Chem items={bottomChem} top={3} />
        <Canvas>
          <svg width="18" height="18" viewBox="0 0 18 18"><circle cx="9" cy="9" r="8" fill="#0a980a" stroke="#066006" /><path d="M6.500 7c0-3.500 5-3.500 5-.5 0 2-2.500 2-2.500 4M9 12v1.800" fill="none" stroke="#fff" strokeWidth="1.600" /></svg>
          <span>ChemDoodle<sup>®</sup></span>
        </Canvas>
        <SaveAs>
          <Button $pad={12}>Save as JSON</Button>
          <Button $pad={12}>Save as image</Button>
          <Button $pad={12}>Save as RXN</Button>
        </SaveAs>
        <Footer>
          <Social>
            <a href="#" aria-label="X"><FaXTwitter size={12} /></a>
            <a href="#" aria-label="GitHub"><FaGithub size={12} /></a>
            <a href="#" aria-label="Chat"><FaCommentDots size={12} /></a>
            <a href="#" aria-label="Report a bug"><FaBug size={12} /></a>
          </Social>
          <Powered>Powered by <a href="#">eLabFTW 5.1.15</a><br />Made with ♥ by <a href="#">Deltablot</a></Powered>
        </Footer>
      </Main>
      <Scrollbar />
    </Frame>
  );
}
